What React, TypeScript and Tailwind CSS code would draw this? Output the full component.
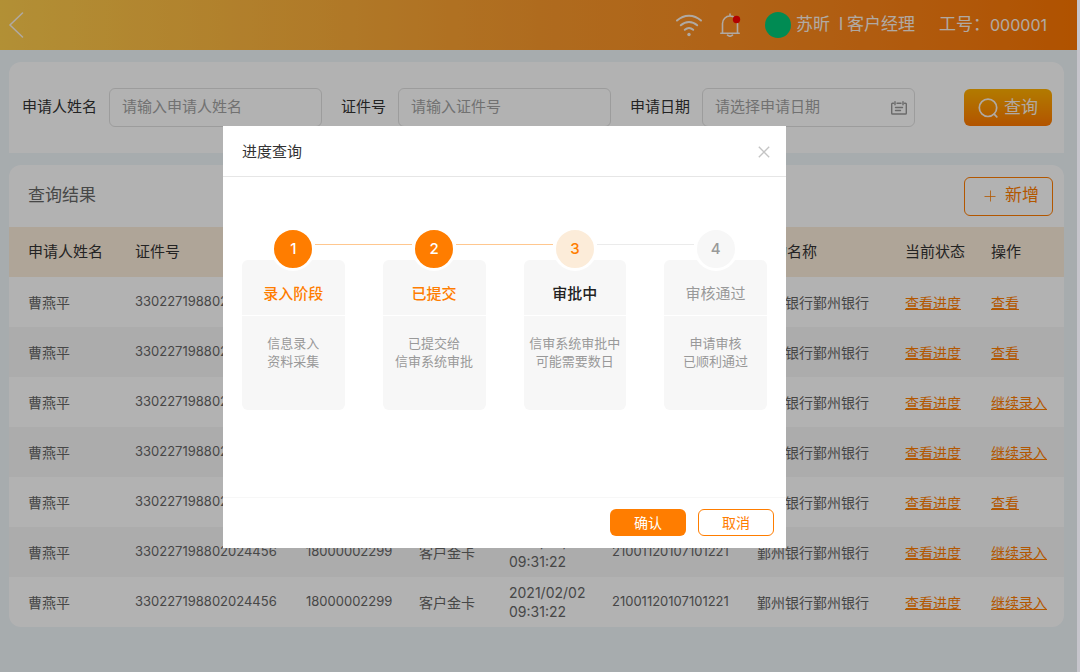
import type { ReactNode } from "react";

const columns = [
  { title: "申请人姓名", width: "w-[126px]" },
  { title: "证件号", width: "w-[171px]" },
  { title: "手机号", width: "w-[113px]" },
  { title: "产品名称", width: "w-[90px]" },
  { title: "申请时间", width: "w-[103px]" },
  { title: "申请编号", width: "w-[145px]" },
  { title: "机构名称", width: "w-[148px]" },
  { title: "当前状态", width: "w-[86px]" },
  { title: "操作", width: "w-[73px]" },
];

const actions = ["查看", "查看", "继续录入", "继续录入", "查看", "继续录入", "继续录入"];

type Step = {
  title: string;
  lines: [string, string];
  circle: string;
  heading: string;
  line: string;
};

const steps: Step[] = [
  {
    title: "录入阶段",
    lines: ["信息录入", "资料采集"],
    circle: "bg-[#ff7d00] text-white",
    heading: "font-medium text-[#ff7d00]",
    line: "bg-[#ffc78f]",
  },
  {
    title: "已提交",
    lines: ["已提交给", "信审系统审批"],
    circle: "bg-[#ff7d00] text-white",
    heading: "font-medium text-[#ff7d00]",
    line: "bg-[#ffc78f]",
  },
  {
    title: "审批中",
    lines: ["信审系统审批中", "可能需要数日"],
    circle: "bg-[#fcecd9] text-[#ff7d00]",
    heading: "font-medium text-[#222222]",
    line: "bg-[#ebebeb]",
  },
  {
    title: "审核通过",
    lines: ["申请审核", "已顺利通过"],
    circle: "bg-[#f7f7f7] text-[#999999]",
    heading: "text-[#999999]",
    line: "hidden",
  },
];

function Header() {
  return (
    <header className="flex h-[50px] items-center bg-linear-to-r from-[#ffce4d] via-[#fb9a2c] to-[#fd7600] pr-[30px] pl-2 text-[17px] text-[#fdf3ea]">
      <button type="button" aria-label="返回">
        <svg width="16" height="26" viewBox="0 0 16 26" fill="none" stroke="currentColor" strokeWidth="1.500" strokeLinecap="round">
          <path d="M14.500 1 2 13l12.500 12" />
        </svg>
      </button>
      <svg className="ml-auto" width="28" height="24" viewBox="0 0 28 24" fill="none" stroke="currentColor" strokeWidth="2" strokeLinecap="round">
        <path d="M2 7.500C9 1 19 1 26 7.500M5.800 12.300c4.800-4.400 11.600-4.400 16.400 0M9.800 16.800c2.500-2.200 5.900-2.200 8.400 0" />
        <circle cx="14" cy="21.500" r="1.700" fill="currentColor" stroke="none" />
      </svg>
      <button type="button" aria-label="通知" className="ml-4">
        <svg width="22" height="24" viewBox="0 0 22 24" fill="none" stroke="currentColor" strokeWidth="1.600" strokeLinecap="round" strokeLinejoin="round">
          <path d="M11 1v2M1.800 20.200h18.400M3.500 20v-9.500a7.500 7.500 0 0 1 15 0V20M8.500 22.200c1.500 1.200 3.500 1.200 5 0" />
          <circle cx="17.500" cy="6.500" r="3.700" fill="#ff0000" stroke="none" />
        </svg>
      </button>
      <span className="ml-6 size-[26px] rounded-full bg-[#00c878]" />
      <span className="ml-[5px]">苏昕</span>
      <span className="ml-[9px]">l</span>
      <span className="ml-1">客户经理</span>
      <span className="ml-6">工号：</span>
      <span className="text-[16px]">000001</span>
    </header>
  );
}

function Field({ id, label, placeholder, icon }: { id: string; label: string; placeholder: string; icon?: ReactNode }) {
  return (
    <div className="flex items-center gap-3">
      <label htmlFor={id} className="text-[15px] whitespace-nowrap text-[#333333]">
        {label}
      </label>
      <div className="flex h-[39px] w-[213px] items-center rounded-md border border-[#e0e0e0] pr-[7px] pl-3">
        <input
          id={id}
          type="text"
          placeholder={placeholder}
          className="min-w-0 flex-1 bg-transparent text-[15px] outline-none placeholder:text-[#a3a3a3]"
        />
        {icon}
      </div>
    </div>
  );
}

function SearchForm() {
  return (
    <form className="mt-3 flex h-[91px] items-center gap-[19px] rounded-t-xl bg-white pr-3 pl-[13px]">
      <Field id="name" label="申请人姓名" placeholder="请输入申请人姓名" />
      <Field id="cert" label="证件号" placeholder="请输入证件号" />
      <Field
        id="date"
        label="申请日期"
        placeholder="请选择申请日期"
        icon={
          <svg width="16" height="14" viewBox="0 0 16 14" fill="none" stroke="#999999" strokeWidth="1.400" strokeLinecap="round">
            <path d="M2.500 2.200h-1a.8.8 0 0 0-.8.8v9.200a.8.8 0 0 0 .8.8h13a.8.8 0 0 0 .8-.8V3a.8.8 0 0 0-.8-.8h-1M6 2.200h4M4 .8v3M12 .8v3M4.500 6.500h7M4.500 9.500h5" />
          </svg>
        }
      />
      <button
        type="button"
        className="ml-auto flex h-[37px] w-[88px] items-center justify-center gap-1.5 rounded-md bg-linear-to-b from-[#ffb000] to-[#ff7800] text-[17px] text-[#fdf3ea]"
      >
        <svg width="20" height="20" viewBox="0 0 20 20" fill="none" stroke="currentColor" strokeWidth="1.700" strokeLinecap="round">
          <circle cx="10" cy="9.800" r="8.700" />
          <path d="m16.200 16.200 2.600 2.600" />
        </svg>
        查询
      </button>
    </form>
  );
}

function Results() {
  return (
    <section className="mt-3 overflow-hidden rounded-xl bg-white">
      <div className="flex h-[62px] items-center justify-between pr-[11px] pl-[19px]">
        <h2 className="text-[17px] text-[#666666]">查询结果</h2>
        <button
          type="button"
          className="flex h-[39px] w-[89px] items-center justify-center gap-[9px] rounded-md border border-[#ff7d00] pl-1.5 text-[17px] text-[#ff7d00]"
        >
          <svg width="12" height="12" viewBox="0 0 12 12" fill="none" stroke="currentColor" strokeWidth="0.800">
            <path d="M6.500 .5v11M.5 6.500h11" />
          </svg>
          新增
        </button>
      </div>
      <table className="w-full table-fixed text-left text-[14px] text-[#666666]">
        <thead>
          <tr className="h-[50px] bg-[#fbecda] text-[15px] text-[#333333]">
            {columns.map((c) => (
              <th key={c.title} className={`${c.width} font-normal whitespace-nowrap first:pl-[19px]`}>
                {c.title}
              </th>
            ))}
          </tr>
        </thead>
        <tbody className="whitespace-nowrap">
          {actions.map((action, i) => (
            <tr key={i} className="h-[50px] even:bg-[#f7f7f7]">
              <td className="pl-[19px]">曹燕平</td>
              <td className="text-[13px]">330227198802024456</td>
              <td className="text-[13px]">18000002299</td>
              <td>客户金卡</td>
              <td className="leading-[19px]">
                2021/02/02
                <br />
                09:31:22
              </td>
              <td className="text-[13px]">21001120107101221</td>
              <td>鄞州银行鄞州银行</td>
              <td>
                <a href="#progress" className="text-[#ff7d00] underline">
                  查看进度
                </a>
              </td>
              <td>
                <a href="#detail" className="text-[#ff7d00] underline">
                  {action}
                </a>
              </td>
            </tr>
          ))}
        </tbody>
      </table>
    </section>
  );
}

function ProgressDialog() {
  return (
    <div className="absolute inset-0 flex items-start justify-center bg-black/30 pt-[126px] pr-[68px]">
      <div role="dialog" aria-labelledby="dialog-title" className="w-[563px] bg-white">
        <div className="flex h-[51px] items-center justify-between border-b border-[#e6e6e6] pt-0.5 pr-4 pl-[19px]">
          <h2 id="dialog-title" className="text-[15px] text-[#333333]">
            进度查询
          </h2>
          <button type="button" aria-label="关闭">
            <svg width="12" height="12" viewBox="0 0 12 12" fill="none" stroke="#c4c4c4" strokeWidth="1.300">
              <path d="m.8.8 10.400 10.400M11.200.8.8 11.200" />
            </svg>
          </button>
        </div>
        <ol className="grid h-[320px] grid-cols-4 content-start gap-x-[38px] px-[19px] pt-[50px]">
          {steps.map((step, i) => (
            <li key={step.title} className="relative flex flex-col items-center">
              <span className={`z-10 flex size-[44px] items-center justify-center rounded-full border-3 border-white text-[15px] font-medium ${step.circle}`}>
                {i + 1}
              </span>
              <span className={`absolute top-[17px] left-[calc(50%+22px)] h-px w-[calc(100%-6px)] ${step.line}`} />
              <div className="-mt-[11px] h-[150px] w-full rounded-md bg-[#f7f7f7] text-center">
                <h3 className={`border-b border-white pt-6 pb-[11px] text-[15px] leading-[20px] ${step.heading}`}>{step.title}</h3>
                <p className="pt-[18px] text-[13px] leading-[18px] whitespace-nowrap text-[#999999]">
                  {step.lines[0]}
                  <br />
                  {step.lines[1]}
                </p>
              </div>
            </li>
          ))}
        </ol>
        <div className="flex h-[51px] items-start justify-end gap-3 border-t border-[#f7f7f7] px-3 pt-[11px] text-[14px]">
          <button type="button" className="h-[27px] w-[76px] rounded-md bg-[#ff7d00] text-white">
            确认
          </button>
          <button type="button" className="h-[27px] w-[76px] rounded-md border border-[#ff7d00] text-[#ff7d00]">
            取消
          </button>
        </div>
      </div>
    </div>
  );
}

export default function App() {
  return (
    <div className="flex min-h-screen bg-[#c6c5cc] font-['Inter','Noto_Sans_CJK_SC',sans-serif]">
      <div className="relative min-w-0 flex-1 bg-[#f0f6fa]">
        <Header />
        <main className="pr-[13px] pl-[9px]">
          <SearchForm />
          <Results />
        </main>
        <ProgressDialog />
      </div>
      <div className="w-[3px]" />
    </div>
  );
}
